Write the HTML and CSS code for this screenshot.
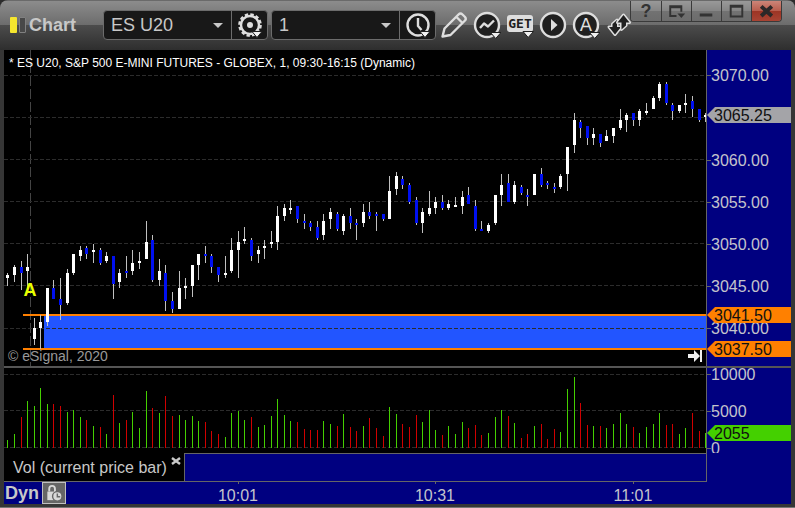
FILE: index.html
```html
<!DOCTYPE html>
<html lang="en">
<head>
  <meta charset="utf-8">
  <title>Chart</title>
  <link rel="stylesheet" href="styles.css">
</head>
<body>
  <div class="window">
    <header class="titlebar">
      <span class="logo"><i class="logo-on"></i><i class="logo-off"></i></span>
      <h1 class="title">Chart</h1>

      <div class="combo combo-symbol">
        <label class="picker">
          <select aria-label="Symbol"><option>ES U20</option></select>
        </label>
        <button class="combo-button" aria-label="Symbol settings">
          <svg class="icon" viewBox="0 0 28 28">
            <circle cx="14" cy="14" r="10.6" class="gear-teeth"/>
            <circle cx="14" cy="14" r="9" class="line"/>
            <circle cx="14" cy="14" r="3" class="solid"/>
            <path d="M16 20.5h10l-5 6z" class="caret"/>
          </svg>
        </button>
      </div>

      <div class="combo combo-interval">
        <label class="picker">
          <select aria-label="Interval"><option>1</option></select>
        </label>
        <button class="combo-button" aria-label="Time template">
          <svg class="icon" viewBox="0 0 28 28">
            <circle cx="14" cy="14" r="10.5" class="line"/>
            <path d="M14 7v8l3.500 4" class="line"/>
            <path d="M16 20.500h10l-5 6z" class="caret"/>
          </svg>
        </button>
      </div>

      <nav class="tools">
        <button class="tool" aria-label="Draw">
          <svg class="icon" viewBox="0 0 28 28">
            <path d="M2.500 25.500L4.500 17.500L18.500 3.500Q20.500 1.500 22.500 3.500L25 6Q26.500 8 25 9.500L10.500 24Z M16.500 6l6 6" class="line"/>
            <path d="M2 26v-4l4 3.500z" class="solid"/>
          </svg>
        </button>
        <button class="tool" aria-label="Studies">
          <svg class="icon" viewBox="0 0 28 28">
            <circle cx="14" cy="14" r="12" class="disc"/>
            <path d="M7 17l4-4.500l4 3l6-6" class="line"/>
            <path d="M17.500 21.500h10.500l-5.300 6z" class="caret"/>
          </svg>
        </button>
        <button class="tool" aria-label="GET">
          <svg class="icon" viewBox="0 0 28 28">
            <rect x="1" y="4" width="26" height="17" rx="3" class="solid"/>
            <text x="14" y="17" class="get">GET</text>
            <path d="M17 20.500h10.500l-5.300 6z" class="caret"/>
          </svg>
        </button>
        <button class="tool" aria-label="Play">
          <svg class="icon" viewBox="0 0 28 28">
            <circle cx="14" cy="14" r="12" class="disc"/>
            <path d="M12 8l6.500 6l-6.500 6z" class="solid"/>
          </svg>
        </button>
        <button class="tool" aria-label="Alerts">
          <svg class="icon" viewBox="0 0 28 28">
            <circle cx="14" cy="14" r="12" class="disc"/>
            <text x="14" y="20" class="letter">A</text>
            <path d="M17.500 21.500h10.500l-5.300 6z" class="caret"/>
          </svg>
        </button>
        <button class="tool" aria-label="Trade">
          <svg class="icon" viewBox="0 0 28 28">
            <path d="M10 23.500l-6-7.500h3.500v-3l4.500-4v7h4z" class="arrows"/>
            <path d="M18.500 4l6 7.500h-3.500v3l-4.500 4v-7h-4z" class="arrows"/>
          </svg>
        </button>
      </nav>

      <div class="window-controls">
        <button aria-label="Help">?</button>
        <button aria-label="Window options">
          <svg viewBox="0 0 30 20"><path d="M20 11V5.500H8.500v10H15M8 6.500h12" class="glyph"/><path d="M16 13h8l-4 4.500z" class="glyph-fill"/></svg>
        </button>
        <button aria-label="Minimize">
          <svg viewBox="0 0 30 20"><path d="M8 13h13v3H8z" class="glyph-fill"/></svg>
        </button>
        <button aria-label="Maximize">
          <svg viewBox="0 0 30 20"><path d="M9 5h12v11H9zM9 6h12" class="glyph"/></svg>
        </button>
        <button class="close" aria-label="Close">
          <svg viewBox="0 0 30 20"><path d="M9.500 5.500l11 10M20.500 5.500l-11 10" class="cross"/></svg>
        </button>
      </div>
    </header>

    <main class="chart">
      <section class="pane">
        <div class="plot">
          <svg id="price-plot" class="price-height"></svg>
          <p class="caption">* ES U20, S&amp;P 500 E-MINI FUTURES - GLOBEX, 1, 09:30-16:15 (Dynamic)</p>
          <p class="copyright">© eSignal, 2020</p>
          <button class="to-end" aria-label="Go to latest bar">
            <svg viewBox="0 0 16 14"><path d="M1 5h6V1l6 6l-6 6V9H1zM13 1h2v12h-2z"/></svg>
          </button>
        </div>
        <svg id="price-axis" class="axis price-height"></svg>
      </section>

      <section class="pane volume">
        <div class="plot">
          <svg id="volume-plot" class="volume-height"></svg>
        </div>
        <svg id="volume-axis" class="axis volume-height"></svg>
      </section>

      <div class="tabs">
        <div class="tab">
          <span>Vol (current price bar)</span>
          <button class="tab-close" aria-label="Remove study">
            <svg viewBox="0 0 10 8"><path d="M1 1l8 6M9 1l-8 6"/></svg>
          </button>
        </div>
        <div class="tab-space"></div>
      </div>

      <footer class="timeline">
        <svg id="time-axis"></svg>
        <div class="mode">
          <span>Dyn</span>
          <button class="lock" aria-label="Lock time">
            <svg viewBox="0 0 22 21">
              <path d="M6 9V6q0-3 3-3t3 3v4" class="shackle"/>
              <path d="M4 9h9v9H4z" class="body"/>
              <circle cx="14.500" cy="14" r="5" class="face"/>
              <path d="M14.500 11v3.500h3" class="hand"/>
            </svg>
          </button>
        </div>
      </footer>
    </main>
  </div>

  <script src="chart.js"></script>
</body>
</html>
```
FILE: styles.css
```css
* {
  box-sizing: border-box;
}

body {
  margin: 0;
  background: #2c2c2c;
  font-family: "Liberation Sans", Arial, sans-serif;
  color: #c8c8c8;
}

h1, p {
  margin: 0;
}

button {
  margin: 0;
  padding: 0;
  border: 0;
  background: none;
  color: inherit;
  font-family: inherit;
}

svg {
  display: block;
}

.window {
  position: relative;
  border-radius: 8px 8px 0 0;
  border-bottom: 1px solid #777;
  background: #363636;
  overflow: hidden;
}

/* title bar */
.titlebar {
  display: flex;
  align-items: center;
  height: 50px;
  padding: 0 0 1px 10px;
  border-top: 1px solid #6a6a6a;
  background: linear-gradient(#8c8c8c 0, #6c6c6c 24px, #4c4c4c 24px, #2e2e2e 100%);
}

.logo {
  display: flex;
  gap: 2px;
}

.logo i {
  width: 7px;
  height: 16px;
  border-radius: 1px;
}

.logo-on {
  background: #f5e62e;
}

.logo-off {
  border: 1px solid #808080;
  background: #484848;
}

.title {
  width: 74px;
  margin-left: 3px;
  font-size: 18px;
  line-height: 20px;
}

.combo {
  display: flex;
  height: 30px;
  border: 1px solid #6c6c6c;
  border-radius: 4px;
  background: #181818;
}

.combo + .combo {
  margin-left: 3px;
}

.picker {
  position: relative;
  width: 127px;
}

.picker::after {
  content: "";
  position: absolute;
  top: 12px;
  right: 8px;
  border: 5px solid transparent;
  border-top-color: #c8c8c8;
  border-bottom: 0;
  pointer-events: none;
}

.picker select {
  width: 100%;
  height: 28px;
  padding: 0 7px;
  border: 0;
  background: none;
  color: #c8c8c8;
  font: 18px "Liberation Sans", Arial, sans-serif;
  appearance: none;
}

.combo-button {
  display: flex;
  align-items: center;
  justify-content: center;
  width: 36px;
  border-left: 1px solid #6c6c6c;
}

.icon {
  width: 28px;
  height: 28px;
}

.line {
  fill: none;
  stroke: #dedede;
  stroke-width: 2.4;
  stroke-linejoin: round;
}

.solid {
  fill: #dedede;
}

.disc {
  fill: #202020;
  stroke: #dedede;
  stroke-width: 2.4;
}

.caret {
  fill: #f0f0f0;
  stroke: #202020;
  stroke-width: 1;
}

.gear-teeth {
  fill: none;
  stroke: #dedede;
  stroke-width: 2.4;
  stroke-dasharray: 3.4 2.15;
}

.get {
  fill: #202020;
  font: bold 13px "DejaVu Sans Mono", monospace;
  text-anchor: middle;
}

.letter {
  fill: #dedede;
  font: 18px "DejaVu Sans", sans-serif;
  text-anchor: middle;
}

.arrows {
  fill: #202020;
  stroke: #dedede;
  stroke-width: 3;
  stroke-linejoin: round;
  paint-order: stroke;
}

.tools {
  display: flex;
  gap: 5px;
  margin-left: 4px;
}

.window-controls {
  position: absolute;
  top: 1px;
  right: 13px;
  display: flex;
  border: 1px solid #3a3a3a;
  border-top: 0;
  border-radius: 0 0 4px 4px;
  overflow: hidden;
}

.window-controls button {
  width: 30px;
  height: 20px;
  background: linear-gradient(#999, #858585 50%, #727272 50%, #6c6c6c);
  color: #333;
  font-size: 18px;
  font-weight: bold;
  line-height: 20px;
}

.window-controls button + button {
  border-left: 1px solid #3a3a3a;
}

.window-controls .close {
  background: linear-gradient(#cc8578, #b85c4c 50%, #9c3424 50%, #a84434);
}

.glyph {
  fill: none;
  stroke: #333;
  stroke-width: 2;
}

.glyph-fill {
  fill: #333;
}

.cross {
  fill: none;
  stroke: #2c2828;
  stroke-width: 4;
}

/* chart body */
.chart {
  margin: 0 4px 3px;
  background: #000080;
}

.pane {
  display: grid;
  grid-template-columns: 1fr 84px;
}

.pane.volume {
  border-top: 2px solid #555;
}

.plot {
  position: relative;
  border-right: 1px solid #666;
  background: #000;
}

.plot > svg {
  width: 100%;
}

.axis {
  width: 84px;
  background: #000080;
}

.price-height {
  height: 316px;
}

.volume-height {
  height: 85px;
}

.caption {
  position: absolute;
  top: 5px;
  left: 5px;
  color: #fff;
  font-size: 12px;
  line-height: 16px;
}

.copyright {
  position: absolute;
  bottom: 2px;
  left: 4px;
  color: #999;
  font-size: 14px;
  line-height: 16px;
}

.to-end {
  position: absolute;
  right: 3px;
  bottom: 3px;
}

.to-end svg {
  width: 16px;
  height: 14px;
  fill: #f0f0f0;
}

.grid {
  stroke: #2c2c2c;
  stroke-dasharray: 4 2;
}

.session {
  stroke: #444;
  stroke-dasharray: 10 3;
}

.zone {
  fill: #2255ff;
}

.level {
  fill: #ff8000;
}

.wick {
  fill: #c0c0c0;
}

.up {
  fill: #fff;
}

.down {
  fill: #0010f0;
}

.vol-up {
  fill: #44d000;
}

.vol-down {
  fill: #d00000;
}

.marker {
  fill: #e8ff00;
  font-size: 18px;
  font-weight: bold;
  text-anchor: middle;
}

.tick {
  fill: #666;
}

.scale {
  fill: #c4c4cc;
  font-size: 16px;
}

.time {
  fill: #c4c4cc;
  font-size: 16px;
  text-anchor: middle;
}

.tag-text {
  fill: #101010;
  font-size: 16px;
}

.tag-last {
  fill: #a4a4a8;
}

.tag-level {
  fill: #ff8000;
}

.tag-volume {
  fill: #44d000;
}

/* study tab and time scale */
.tabs {
  display: flex;
  height: 29px;
  margin-right: 84px;
  border-right: 1px solid #666;
  border-bottom: 1px solid #666;
}

.tab {
  display: flex;
  gap: 4px;
  padding: 4px 3px 0 9px;
  background: #000;
  font-size: 16px;
  line-height: 22px;
}

.tab-close {
  align-self: flex-start;
}

.tab-close svg {
  width: 10px;
  height: 8px;
  fill: none;
  stroke: #c8c8c8;
  stroke-width: 2.4;
}

.tab-space {
  flex: 1;
  border-top: 1px solid #666;
  border-left: 1px solid #666;
}

.timeline {
  display: grid;
  height: 22px;
}

.timeline > * {
  grid-area: 1 / 1;
}

#time-axis {
  width: 100%;
  height: 22px;
}

.mode {
  display: flex;
  align-items: center;
  gap: 3px;
  padding-left: 1px;
  font-size: 18px;
  font-weight: bold;
  line-height: 22px;
}

.lock {
  border: 1px solid #c0c0c0;
  background: #666;
}

.lock svg {
  width: 22px;
  height: 20px;
}

.shackle {
  fill: none;
  stroke: #d8d8d8;
  stroke-width: 2;
}

.body {
  fill: #d8d8d8;
}

.face {
  fill: #d8d8d8;
  stroke: #666;
  stroke-width: 1.5;
}

.hand {
  fill: none;
  stroke: #666;
  stroke-width: 1.5;
}
```
FILE: chart.js
```js
// one row per bar: high, body top, body bottom, low, rising
const candles = [
  [223, 225, 228, 236, 1], [215, 217, 225, 232, 1], [211, 217, 223, 240, 0], [204, 217, 221, 238, 1],
  [268, 278, 289, 295, 1], [265, 272, 278, 299, 1], [238, 238, 272, 276, 1], [230, 238, 249, 249, 0],
  [228, 249, 255, 270, 0], [219, 223, 253, 255, 1], [204, 204, 223, 225, 1], [196, 200, 206, 211, 1],
  [196, 198, 204, 209, 0], [194, 200, 202, 213, 1], [198, 200, 213, 215, 0], [202, 206, 211, 213, 1],
  [206, 206, 234, 249, 0], [219, 223, 232, 238, 1], [206, 221, 223, 228, 0], [200, 213, 221, 225, 1],
  [202, 211, 213, 219, 1], [171, 192, 209, 209, 1], [185, 190, 230, 232, 0], [209, 221, 230, 236, 1],
  [215, 223, 251, 261, 0], [242, 251, 259, 263, 0], [221, 238, 259, 259, 1], [228, 236, 238, 249, 1],
  [215, 215, 236, 247, 1], [204, 204, 215, 230, 1], [196, 204, 206, 213, 0], [204, 206, 217, 223, 0],
  [217, 217, 225, 232, 0], [206, 223, 225, 228, 1], [188, 200, 221, 223, 1], [181, 192, 200, 228, 1],
  [177, 189, 191, 194, 1], [188, 190, 206, 211, 0], [196, 200, 204, 213, 1], [190, 196, 198, 209, 1],
  [181, 192, 194, 198, 1], [156, 166, 192, 200, 1], [154, 158, 166, 171, 1], [150, 158, 160, 164, 1],
  [156, 156, 169, 173, 0], [164, 171, 173, 179, 0], [171, 173, 177, 181, 0], [171, 177, 188, 190, 0],
  [164, 171, 185, 190, 1], [158, 162, 169, 179, 1], [162, 164, 179, 181, 0], [164, 166, 181, 185, 1],
  [158, 166, 173, 179, 0], [169, 173, 175, 190, 0], [154, 162, 173, 177, 1], [152, 162, 166, 169, 0],
  [162, 164, 166, 181, 0], [164, 164, 169, 171, 0], [126, 141, 169, 169, 1], [122, 126, 139, 145, 1],
  [126, 129, 135, 139, 0], [133, 135, 152, 154, 0], [147, 150, 173, 175, 0], [158, 162, 173, 183, 1],
  [141, 158, 164, 166, 1], [147, 152, 158, 164, 1], [145, 152, 158, 160, 0], [150, 154, 158, 160, 1],
  [147, 155, 157, 157, 1], [141, 147, 156, 164, 1], [137, 145, 154, 154, 0], [150, 156, 179, 181, 0],
  [171, 179, 181, 181, 0], [173, 175, 181, 183, 1], [145, 145, 173, 175, 1], [124, 135, 145, 156, 1],
  [124, 133, 152, 152, 0], [131, 135, 152, 154, 1], [135, 137, 143, 145, 0], [139, 145, 147, 156, 0],
  [124, 124, 145, 145, 1], [118, 124, 135, 137, 0], [131, 133, 135, 139, 0], [133, 137, 139, 143, 0],
  [124, 126, 137, 139, 1], [97, 97, 124, 141, 1], [63, 70, 95, 103, 1], [70, 72, 78, 88, 0],
  [76, 76, 88, 95, 0], [78, 84, 88, 95, 1], [84, 84, 93, 97, 0], [80, 86, 91, 91, 1],
  [78, 78, 86, 93, 1], [59, 70, 78, 80, 1], [63, 65, 70, 82, 1], [63, 63, 70, 76, 0],
  [59, 61, 70, 76, 1], [53, 61, 63, 65, 1], [46, 48, 59, 59, 1], [32, 34, 48, 51, 1],
  [32, 34, 53, 55, 0], [53, 55, 61, 70, 0], [55, 55, 61, 63, 1], [44, 53, 55, 63, 1],
  [46, 51, 59, 67, 0], [59, 59, 70, 72, 0], [63, 65, 67, 72, 1]
];

// negative = bar closed lower
const volumes = [
  8, 14, -31, 47, 42, 60, 44, -44, -42, 36, 38, 31, -28, 22, -21, 14, -53, 25, -28, 36,
  20, 57, -40, 35, -52, -32, 33, 28, 32, 27, -26, -17, -14, 11, 35, 37, 28, -31, 21, 23,
  32, 49, 33, 27, -26, -19, -18, -18, 27, 24, -22, 34, -21, -17, 22, -30, -20, -12, 41, 34,
  -24, -21, -33, 26, 38, 18, -13, 22, 14, 26, -20, -23, -13, 15, 31, 38, -32, 25, -10, -14,
  22, -24, -9, -19, 16, 59, 71, -45, -23, 22, -22, 20, 24, 35, 24, -21, 15, 21, 24, 35,
  -23, -24, 14, 20, -35, -17, 15
];

function barX(i) {
  return Math.round(3.4 + i * 6.583);
}

function rect(x, y, width, height, cls) {
  return `<rect x="${x}" y="${y}" width="${width}" height="${height}" class="${cls}"/>`;
}

function gridLine(y) {
  return `<line x1="0" x2="100%" y1="${y + 0.5}" y2="${y + 0.5}" class="grid"/>`;
}

function label(y, text) {
  return rect(0, y, 4, 1, "tick") + `<text x="4" y="${y + 6}" class="scale">${text}</text>`;
}

function tag(y, text, cls) {
  return `<path d="M0 ${y}l8 -8h76v16h-76z" class="${cls}"/>` +
    `<text x="7" y="${y + 6}" class="tag-text">${text}</text>`;
}

function drawPrice() {
  let out = '<line x1="26.5" x2="26.5" y1="0" y2="316" class="session"/>';
  out += rect(40, 266, "100%", 32, "zone");
  [25, 67, 109, 151, 193, 235, 278].forEach(y => out += gridLine(y));
  out += rect(19, 264, "100%", 2, "level") + rect(19, 298, "100%", 2, "level");
  candles.forEach(([high, top, bottom, low, rising], i) => {
    const x = barX(i);
    out += rect(x, high, 1, low - high, "wick");
    out += rect(x - 1, top, 3, bottom - top, rising ? "up" : "down");
  });
  out += '<text x="26" y="246" class="marker">A</text>';
  document.getElementById("price-plot").innerHTML = out;

  document.getElementById("price-axis").innerHTML =
    label(25, "3070.00") + label(110, "3060.00") + label(152, "3055.00") +
    label(194, "3050.00") + label(236, "3045.00") + label(278, "3040.00") +
    tag(65, "3065.25", "tag-last") +
    tag(265, "3041.50", "tag-level") +
    tag(299, "3037.50", "tag-level");
}

function drawVolume() {
  let out = [6, 42, 79].map(gridLine).join("");
  volumes.forEach((v, i) => {
    const h = Math.abs(v);
    out += rect(barX(i), 80 - h, 1, h, v > 0 ? "vol-up" : "vol-down");
  });
  document.getElementById("volume-plot").innerHTML = out;

  document.getElementById("volume-axis").innerHTML =
    label(6, "10000") + label(43, "5000") + label(80, "0") +
    tag(65, "2055", "tag-volume");
}

function drawTimes() {
  const times = { 35: "10:01", 65: "10:31", 95: "11:01" };
  document.getElementById("time-axis").innerHTML = Object.keys(times).map(i =>
    rect(barX(i), 0, 1, 2, "tick") + `<text x="${barX(i)}" y="19" class="time">${times[i]}</text>`
  ).join("");
}

drawPrice();
drawVolume();
drawTimes();
```
